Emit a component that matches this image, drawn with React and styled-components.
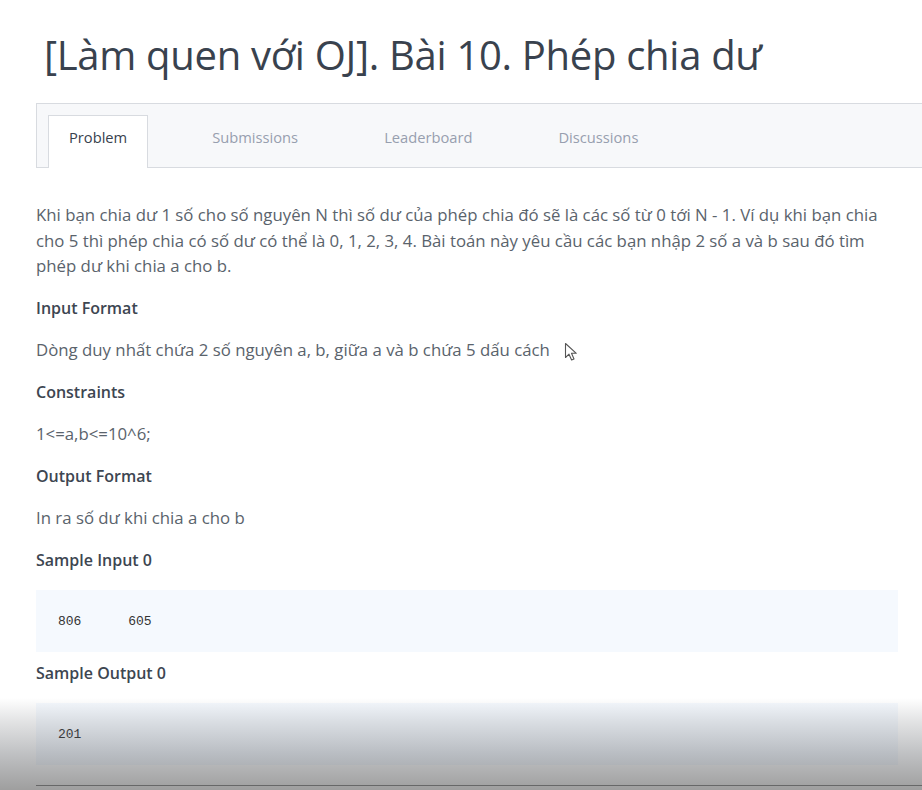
import React from 'react';
import styled, { createGlobalStyle } from 'styled-components';

const GlobalStyle = createGlobalStyle`
  html, body {
    margin: 0;
    padding: 0;
    background: #fff;
    overflow: hidden;
  }
  body {
    font-family: "Open Sans", "Noto Sans", sans-serif;
  }
`;

const tabs = ['Problem', 'Submissions', 'Leaderboard', 'Discussions'];

const sections = [
  { title: 'Input Format', text: 'Dòng duy nhất chứa 2 số nguyên a, b, giữa a và b chứa 5 dấu cách', cursor: true },
  { title: 'Constraints', text: '1<=a,b<=10^6;' },
  { title: 'Output Format', text: 'In ra số dư khi chia a cho b' },
];

function Cursor() {
  return (
    <CursorIcon width="16" height="20" viewBox="0 0 16 20">
      <path
        d="M1.5 1.5 L1.5 15.5 L5 12.2 L7.6 18 L10 17 L7.5 11.3 L12.3 11.3 Z"
        fill="#fff"
        stroke="#555"
        strokeWidth="1.1"
        strokeLinejoin="round"
      />
    </CursorIcon>
  );
}

function App() {
  return (
    <Page>
      <GlobalStyle />
      <Title>[Làm quen với OJ]. Bài 10. Phép chia dư</Title>
      <TabBar>
        {tabs.map((t, i) => (
          <Tab key={t} active={i === 0}>{t}</Tab>
        ))}
      </TabBar>
      <Content>
        <Paragraph>
          Khi bạn chia dư 1 số cho số nguyên N thì số dư của phép chia đó sẽ là các số từ 0 tới N - 1. Ví dụ khi bạn chia
          cho 5 thì phép chia có số dư có thể là 0, 1, 2, 3, 4. Bài toán này yêu cầu các bạn nhập 2 số a và b sau đó tìm
          phép dư khi chia a cho b.
        </Paragraph>
        {sections.map((s) => (
          <Section key={s.title}>
            <Heading>{s.title}</Heading>
            <Text>
              {s.text}
              {s.cursor && <Cursor />}
            </Text>
          </Section>
        ))}
        <Heading>Sample Input 0</Heading>
        <CodeBox>{'806      605'}</CodeBox>
        <Heading afterCode>Sample Output 0</Heading>
        <CodeBox>201</CodeBox>
        <NextBox />
      </Content>
      <Shade />
    </Page>
  );
}

export default App;

const Page = styled.div`
  position: relative;
  width: 922px;
  height: 790px;
  overflow: hidden;
  background: #fff;
`;

const Title = styled.h1`
  margin: 0;
  padding: 29px 0 0 44px;
  height: 103px;
  box-sizing: border-box;
  font-size: 40px;
  font-weight: 400;
  color: #39424e;
  line-height: 52px;
  letter-spacing: -0.3px;
`;

const TabBar = styled.div`
  margin-left: 36px;
  height: 65px;
  box-sizing: border-box;
  background: #f7f8fa;
  border: 1px solid #d8dbe0;
  border-right: none;
  display: flex;
  align-items: flex-end;
  padding-left: 11px;
`;

const Tab = styled.div`
  box-sizing: border-box;
  height: 53px;
  margin-bottom: -1px;
  padding: 0 ${(p) => (p.active ? '20px' : '38px')};
  margin-right: ${(p) => (p.active ? '25px' : '8px')};
  display: flex;
  align-items: center;
  padding-bottom: 11px;
  font-size: 14.7px;
  color: ${(p) => (p.active ? '#39424e' : '#979faf')};
  background: ${(p) => (p.active ? '#fff' : 'transparent')};
  border: 1px solid ${(p) => (p.active ? '#d8dbe0' : 'transparent')};
  border-bottom: none;
`;

const Content = styled.div`
  padding: 34px 24px 0 36px;
  width: 862px;
  box-sizing: content-box;
`;

const Paragraph = styled.p`
  margin: 0;
  font-size: 16.8px;
  line-height: 25.7px;
  color: #5a636c;
`;

const Section = styled.div``;

const Heading = styled.h3`
  margin: ${(p) => (p.afterCode ? '-8px' : '0')} 0 0 0;
  padding-top: 17px;
  height: 42px;
  box-sizing: border-box;
  font-size: 16px;
  font-weight: 600;
  line-height: 24px;
  color: #3d4651;
`;

const Text = styled.p`
  margin: 0;
  padding-top: 17px;
  height: 42px;
  box-sizing: border-box;
  font-size: 16.8px;
  line-height: 24px;
  color: #5a636c;
  display: flex;
  align-items: flex-start;
`;

const CursorIcon = styled.svg`
  margin-left: 14px;
  margin-top: 4px;
`;

const CodeBox = styled.pre`
  margin: 17px 0 0 0;
  height: 62px;
  box-sizing: border-box;
  padding: 0 22px;
  display: flex;
  align-items: center;
  background: #f5f9fe;
  font-family: "Liberation Mono", "DejaVu Sans Mono", monospace;
  font-size: 13px;
  color: #333;
`;

const NextBox = styled.div`
  margin-top: 20px;
  height: 40px;
  border-top: 1px solid #888;
  margin-right: -24px;
`;

const Shade = styled.div`
  position: absolute;
  left: 0;
  right: 0;
  bottom: 0;
  height: 92px;
  pointer-events: none;
  background: linear-gradient(
    to bottom,
    rgba(80, 84, 90, 0) 0%,
    rgba(80, 84, 90, 0.16) 25%,
    rgba(80, 84, 90, 0.36) 60%,
    rgba(70, 70, 70, 0.52) 100%
  );
`;
